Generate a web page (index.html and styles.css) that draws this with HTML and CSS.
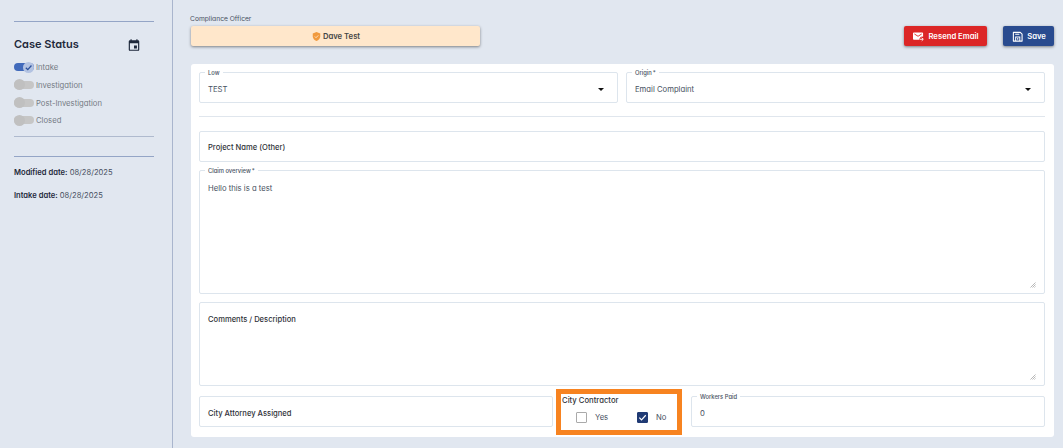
FILE: index.html
```html
<!DOCTYPE html>
<html lang="en">
<head>
    <meta charset="UTF-8">
    <meta name="viewport" content="width=device-width, initial-scale=1.0">
    <title>Case</title>
    <link rel="stylesheet" href="styles.css">
</head>
<body>

<aside class="sidebar">
    <div class="line"></div>
    <div class="status-head">
        <h2>Case Status</h2>
        <svg class="calendar" viewBox="0 0 24 24"><path fill="currentColor" d="M19 4h-1V2h-2v2H8V2H6v2H5a2 2 0 0 0-2 2v14a2 2 0 0 0 2 2h14a2 2 0 0 0 2-2V6a2 2 0 0 0-2-2zm0 16H5V9h14v11zM12 13h5v5h-5z"/></svg>
    </div>
    <ul class="steps">
        <li><span class="toggle on"><svg viewBox="0 0 10 10"><path d="M2 5.2 4.2 7.4 8.3 2.8"/></svg></span><span class="step">Intake</span></li>
        <li><span class="toggle"></span><span class="step">Investigation</span></li>
        <li><span class="toggle"></span><span class="step">Post-Investigation</span></li>
        <li><span class="toggle"></span><span class="step">Closed</span></li>
    </ul>
    <div class="line light"></div>
    <div class="line second"></div>
    <p class="date"><b>Modified date:</b> <span>08/28/2025</span></p>
    <p class="date"><b>Intake date:</b> <span>08/28/2025</span></p>
</aside>

<main class="content">
    <div class="topbar">
        <div class="officer">
            <span class="officer-label">Compliance Officer</span>
            <button class="btn officer-btn">
                <svg viewBox="0 0 24 24"><path fill="#f19a3e" d="M12 0 2 4v7.500C2 17.500 6.300 22.300 12 24c5.700-1.700 10-6.500 10-12.500V4z"/><path fill="none" stroke="#ffe7cb" stroke-width="2.400" d="m7.500 12 3.200 3.200 6-6.200"/></svg>
                <span>Dave Test</span>
            </button>
        </div>
        <div class="actions">
            <button class="btn resend">
                <svg viewBox="0 0 24 24"><path fill="#fff" d="M2 3h18a2 2 0 0 1 2 2v7.500a6 6 0 0 0-8 6.500H2a2 2 0 0 1-2-2V5a2 2 0 0 1 2-2z"/><path fill="none" stroke="#dc2626" stroke-width="2" d="m3 6.500 8 5 8-5"/><path fill="none" stroke="#fff" stroke-width="2" d="M15 18h7M19 14.500l3.500 3.500-3.500 3.500"/></svg>
                <span>Resend Email</span>
            </button>
            <button class="btn save">
                <svg viewBox="0 0 24 24"><path fill="none" stroke="#fff" stroke-width="2.400" stroke-linejoin="round" d="M3 3h15l4 4v15H3z"/><path fill="none" stroke="#fff" stroke-width="2.200" d="M7 7h9M8 22v-9h9v9M12.500 15v4"/></svg>
                <span>Save</span>
            </button>
        </div>
    </div>

    <section class="card">
        <div class="row">
            <div class="field select">
                <label>Low</label>
                <span class="value">TEST</span>
                <i class="caret"></i>
            </div>
            <div class="field select">
                <label>Origin<span class="star">*</span></label>
                <span class="value">Email Complaint</span>
                <i class="caret"></i>
            </div>
        </div>
        <div class="divider"></div>
        <div class="field project">
            <span class="placeholder">Project Name (Other)</span>
        </div>
        <div class="field area claim">
            <label>Claim overview<span class="star">*</span></label>
            <span class="value">Hello this is a test</span>
            <svg class="grip" viewBox="0 0 6 6"><path d="M0.500 5.500 5.500 0.500M2.500 5.500l3-3M4.500 5.500l1-1"/></svg>
        </div>
        <div class="field area comments">
            <span class="placeholder">Comments / Description</span>
            <svg class="grip" viewBox="0 0 6 6"><path d="M0.500 5.500 5.500 0.500M2.500 5.500l3-3M4.500 5.500l1-1"/></svg>
        </div>
        <div class="row bottom">
            <div class="field">
                <span class="placeholder">City Attorney Assigned</span>
            </div>
            <div class="contractor">
                <span class="contractor-title">City Contractor</span>
                <div class="checks">
                    <span class="box"></span><span class="check-label yes">Yes</span>
                    <span class="box checked"><svg viewBox="0 0 10 10"><path d="M1.500 5.200 3.900 7.600 8.600 2.500"/></svg></span><span class="check-label">No</span>
                </div>
            </div>
            <div class="field">
                <label>Workers Paid</label>
                <span class="value">0</span>
            </div>
        </div>
    </section>
</main>

</body>
</html>
```
FILE: styles.css
```css
*{
    margin: 0;
    padding: 0;
    box-sizing: border-box;
}
html, body{
    height: 100%;
    overflow: hidden;
}
body{
    display: flex;
    font-family: Inter, "Liberation Sans", sans-serif;
    font-feature-settings: "cv11";
    font-size: 7.7px;
    line-height: 10px;
    color: #475061;
    background: #e1e7f0;
    white-space: nowrap;
}

/* sidebar */
.sidebar{
    width: 173px;
    flex: none;
    padding: 21px 18px 0 14px;
    border-right: 1px solid #a9b5cd;
}
.line{
    height: 1px;
    background: #94a5c6;
}
.line.light{
    margin-top: 7px;
    background: #afbace;
}
.line.second{
    margin-top: 19px;
}
.status-head{
    display: flex;
    justify-content: space-between;
    align-items: center;
    height: 14px;
    margin-top: 15px;
    padding-right: 13px;
    color: #1e293b;
}
.status-head h2{
    font-size: 11px;
    font-weight: 600;
}
.calendar{
    width: 14px;
    height: 14px;
    margin-top: 2px;
}
.steps{
    list-style: none;
    margin-top: 7.6px;
    color: #747a83;
}
.steps li{
    display: flex;
    align-items: center;
    gap: 2px;
    height: 17.6px;
}
.step{
    padding-top: 2px;
}
.toggle{
    display: flex;
    align-items: center;
    width: 20px;
    height: 8px;
    background: #c6c6c6;
    border-radius: 4px;
}
.toggle::before{
    content: "";
    width: 11px;
    height: 11px;
    border-radius: 50%;
    background: #c0c0c0;
}
.toggle.on{
    justify-content: flex-end;
    background: #416abb;
}
.toggle.on::before{
    display: none;
}
.toggle.on svg{
    width: 11px;
    height: 11px;
    padding: 1px;
    border-radius: 50%;
    background: #b3c3e2;
}
.toggle.on path{
    fill: none;
    stroke: #2c519b;
    stroke-width: 1.4;
}
.date{
    margin-top: 11px;
    font-size: 7.6px;
}
.date + .date{
    margin-top: 13px;
}
.date b{
    font-weight: 600;
    color: #1e293b;
}

/* top bar */
.content{
    flex: 1;
    padding: 13px 9px 0 18px;
}
.topbar{
    display: flex;
    justify-content: space-between;
    align-items: flex-end;
    height: 33px;
}
.officer{
    display: flex;
    flex-direction: column;
    gap: 2px;
    width: 289px;
}
.officer-label{
    margin-left: -1px;
    padding-top: 1px;
    font-size: 6.7px;
}
.btn{
    display: flex;
    justify-content: center;
    align-items: center;
    gap: 4px;
    height: 20px;
    border: 0;
    border-radius: 2px;
    font: 600 7.7px/10px Inter, sans-serif;
    font-feature-settings: "cv11";
    color: #fff;
    box-shadow: 0 1px 3px rgba(0, 0, 0, 0.45);
}
.btn span{
    padding-top: 1px;
}
.btn svg{
    width: 11px;
    height: 11px;
}
.officer-btn{
    gap: 2px;
    padding-left: 1px;
    background: #ffe7cb;
    color: #454545;
}
.officer-btn svg{
    width: 9px;
    height: 9px;
}
.actions{
    display: flex;
    gap: 16px;
}
.resend{
    width: 83px;
    padding-left: 1px;
    background: #dc2626;
}
.save{
    width: 51px;
    padding-left: 1px;
    background: #294b8f;
}

/* form */
.card{
    display: flex;
    flex-direction: column;
    height: 373px;
    margin-top: 18px;
    padding: 8px 9px 0 8px;
    background: #fff;
    border-radius: 3px;
}
.row{
    display: flex;
    gap: 8px;
}
.row .field{
    flex: 1;
}
.field{
    position: relative;
    display: flex;
    align-items: center;
    height: 31px;
    padding: 3px 8px 0;
    border: 1px solid #dde5ed;
    border-radius: 2px;
}
.field.project{
    padding-top: 1px;
}
.field .value, .field .placeholder{
    padding-top: 2px;
}
.field label{
    position: absolute;
    top: -5px;
    left: 5px;
    padding: 0 3px;
    font-size: 5.8px;
    font-weight: 500;
    background: #fff;
}
.star{
    margin-left: 1px;
}
.select{
    justify-content: space-between;
    padding-right: 13px;
}
.caret{
    border: 3px solid transparent;
    border-top-color: #111;
    border-bottom: 0;
}
.placeholder{
    color: #303238;
    font-size: 7.6px;
    font-weight: 500;
}
.divider{
    height: 1px;
    margin: 13px 0 14px;
    background: #e0e6ed;
}
.field.area{
    align-items: flex-start;
    padding-top: 11px;
}
.claim{
    height: 124px;
    margin-top: 8px;
}
.field.comments{
    height: 84px;
    margin: 8px 0 10px;
    padding-top: 10px;
}
.grip{
    position: absolute;
    right: 8px;
    bottom: 5px;
    width: 6px;
    height: 6px;
    fill: none;
    stroke: #999;
    stroke-width: 0.7;
}

/* last row */
.row.bottom{
    gap: 0;
}
.contractor{
    width: 126px;
    height: 46px;
    margin: -7px 9px 0 3px;
    padding: 2px 1px 0;
    border: 5px solid #f78320;
}
.contractor-title{
    display: block;
    font-weight: 500;
    color: #303238;
}
.checks{
    display: flex;
    align-items: center;
    height: 16px;
    margin-top: 3px;
    padding-left: 14px;
}
.check-label{
    padding-top: 2px;
}
.box{
    width: 11px;
    height: 11px;
    margin-right: 8px;
    border: 1px solid #aaa;
    border-radius: 1px;
}
.yes{
    width: 42px;
}
.box.checked{
    background: #203a74;
    border-color: #203a74;
}
.box svg{
    display: block;
    fill: none;
    stroke: #fff;
    stroke-width: 1.3;
}
```
